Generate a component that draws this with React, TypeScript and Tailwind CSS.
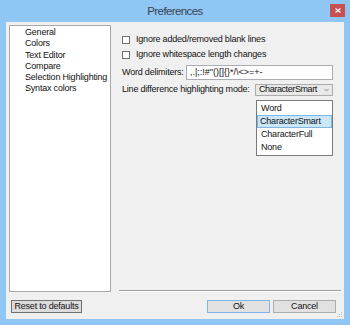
import React from 'react'

const font = { fontFamily: '"Liberation Sans", Arial, sans-serif' }

const pages = ['General', 'Colors', 'Text Editor', 'Compare', 'Selection Highlighting', 'Syntax colors']
const modes = ['Word', 'CharacterSmart', 'CharacterFull', 'None']

function Check({ label }: { label: string }) {
  return (
    <div className="flex items-center h-[15px] gap-[6px]">
      <span className="w-[8px] h-[8px] border border-[#707070] bg-white" />
      <span>{label}</span>
    </div>
  )
}

export default function App() {
  return (
    <div
      className="w-[350px] h-[325px] bg-[#8fc6f4] flex flex-col text-[9px] tracking-[-0.2px] text-[#111]"
      style={font}
    >
      {/* title bar */}
      <div className="h-[22px] flex items-center relative">
        <div className="flex-1 text-center text-[11.5px] tracking-[-0.6px] text-[#3a4450] pt-[1px]">Preferences</div>
        <div className="absolute right-[5px] top-[4px] w-[15px] h-[13px] bg-[#c75050] flex items-center justify-center">
          <svg width="6" height="5" viewBox="0 0 6 5">
            <path d="M0.5 0.5 L5.5 4.5 M5.5 0.5 L0.5 4.5" stroke="white" strokeWidth="1.2" />
          </svg>
        </div>
      </div>

      {/* client */}
      <div className="mx-[6px] mb-[6px] flex-1 bg-[#f0f0f0] flex flex-col p-[3px] relative">
        <div className="flex h-[267px]">
          <ul className="w-[102px] bg-white border border-[#a9a9a9] pt-[1px] pl-[15px] leading-[11.3px]">
            {pages.map(p => (
              <li key={p}>{p}</li>
            ))}
          </ul>

          <div className="flex-1 ml-[8px] flex flex-col">
            <div className="flex-1 pl-[3px] pr-[8px] pt-[7px] flex flex-col">
              <Check label="Ignore added/removed blank lines" />
              <Check label="Ignore whitespace length changes" />
              <div className="flex items-center mt-[3px] h-[15px]">
                <span className="w-[64px]">Word delimiters:</span>
                <div className="flex-1 h-[15px] bg-white border border-[#abadb3] flex items-center pl-[3px] tracking-[0px]">
                  {',.|;:!#"()[]{}*/\\<>=+-'}
                </div>
              </div>
              <div className="flex items-center mt-[4px] h-[12px] relative">
                <span className="flex-1">Line difference highlighting mode:</span>
                <div className="w-[78px] h-[12px] bg-[#e8e8e8] border border-[#acacac] flex items-center pl-[3px] relative">
                  <span className="tracking-[-0.4px]">CharacterSmart</span>
                  <svg className="absolute right-[3px] top-[3px]" width="5" height="4" viewBox="0 0 5 4">
                    <path d="M0.5 1 L2.5 3 L4.5 1" stroke="#8a8a8a" fill="none" />
                  </svg>
                </div>
                <div className="absolute right-0 top-[16px] w-[77px] bg-white border border-[#7a7a7a] flex flex-col py-[1px] z-10">
                  {modes.map(m => (
                    <div
                      key={m}
                      className={
                        m === 'CharacterSmart'
                          ? 'h-[13px] flex items-center pl-[2px] bg-[#cbe6f7] border border-[#7db7e6]'
                          : 'h-[13px] flex items-center pl-[3px] border border-transparent'
                      }
                    >
                      {m}
                    </div>
                  ))}
                </div>
              </div>
            </div>
            <div className="h-[1px] bg-[#a0a0a0] border-b border-white box-content" />
          </div>
        </div>

        <div className="flex items-center mt-[8px] h-[13px]">
          <button className="ml-[2px] h-[13px] w-[71px] bg-[#dcdcdc] border border-[#707070] text-[9px] leading-none">
            Reset to defaults
          </button>
          <div className="flex-1" />
          <button className="h-[13px] w-[63px] bg-[#e1e1e1] border border-[#7eb4ea] text-[9px] leading-none">Ok</button>
          <button className="ml-[3px] mr-[5px] h-[13px] w-[63px] bg-[#e1e1e1] border border-[#adadad] text-[9px] leading-none">
            Cancel
          </button>
        </div>

        <svg className="absolute right-[1px] bottom-[1px]" width="6" height="6" viewBox="0 0 6 6">
          <rect x="4" y="0" width="1" height="1" fill="#b8b8b8" />
          <rect x="2" y="2" width="1" height="1" fill="#b8b8b8" />
          <rect x="4" y="2" width="1" height="1" fill="#b8b8b8" />
          <rect x="0" y="4" width="1" height="1" fill="#b8b8b8" />
          <rect x="2" y="4" width="1" height="1" fill="#b8b8b8" />
          <rect x="4" y="4" width="1" height="1" fill="#b8b8b8" />
        </svg>
      </div>
    </div>
  )
}
